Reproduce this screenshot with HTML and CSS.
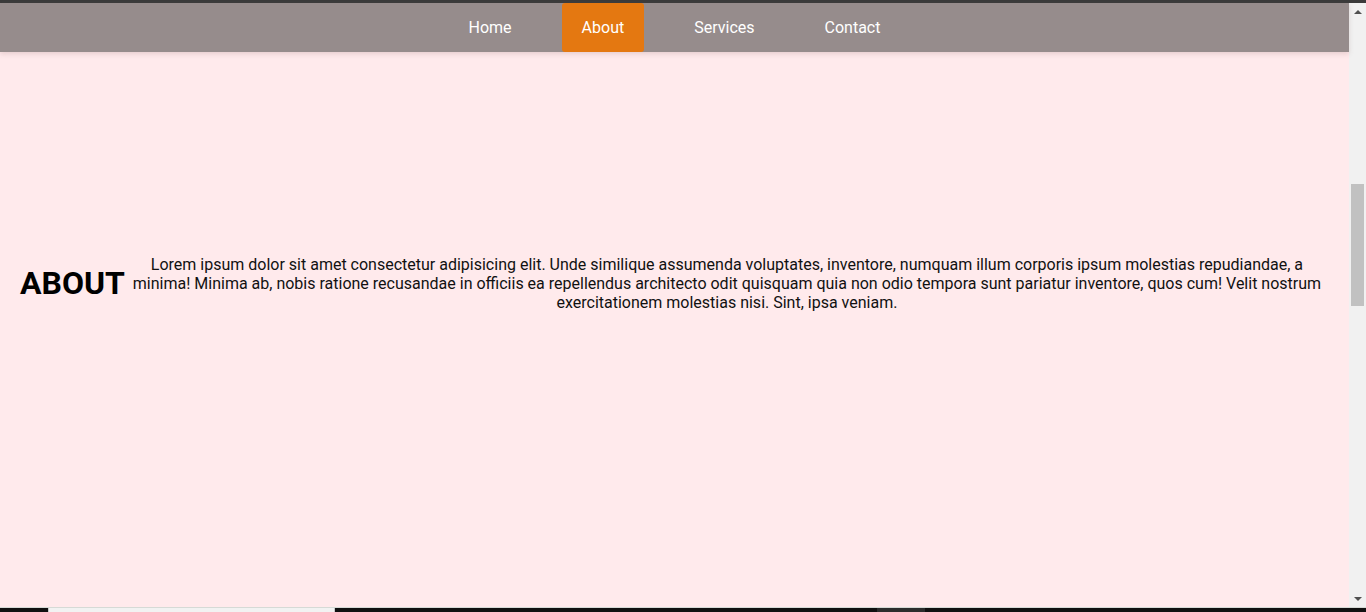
FILE: index.html
```html
<!DOCTYPE html>
<html lang="en">
<head>
<meta charset="utf-8">
<title>About</title>
<link rel="stylesheet" href="styles.css">
</head>
<body>
<div class="topline"></div>
<div class="window">
  <div class="page">
    <nav class="nav">
      <a class="nav-item" href="#">Home</a>
      <a class="nav-item active" href="#">About</a>
      <a class="nav-item" href="#">Services</a>
      <a class="nav-item" href="#">Contact</a>
    </nav>
    <main class="content">
      <section class="about">
        <h1 class="about-title">ABOUT</h1>
        <p class="about-text">Lorem ipsum dolor sit amet consectetur adipisicing elit. Unde similique assumenda voluptates, inventore, numquam illum corporis ipsum molestias repudiandae, a minima! Minima ab, nobis ratione recusandae in officiis ea repellendus architecto odit quisquam quia non odio tempora sunt pariatur inventore, quos cum! Velit nostrum exercitationem molestias nisi. Sint, ipsa veniam.</p>
      </section>
    </main>
  </div>
  <div class="scrollbar">
    <div class="arrow up"></div>
    <div class="track"><div class="thumb"></div></div>
    <div class="arrow down"></div>
  </div>
</div>
<div class="bottomline"></div>
<div class="taskbar">
  <div class="tb-seg dark"></div>
  <div class="tb-seg light"></div>
  <div class="tb-seg dark mid"></div>
  <div class="tb-seg grey"></div>
  <div class="tb-seg dark rest"></div>
</div>
</body>
</html>
```

FILE: styles.css
```css
html, body {
  margin: 0;
  padding: 0;
  height: 612px;
  overflow: hidden;
}
body {
  display: flex;
  flex-direction: column;
  font-family: Roboto, "Liberation Sans", sans-serif;
  background: #ffe9eb;
}
.topline {
  height: 3px;
  background: #3b3b3b;
  flex: none;
}
.window {
  height: 604px;
  display: flex;
  flex: none;
}
.page {
  flex: 1;
  display: flex;
  flex-direction: column;
  background: #ffeaec;
  min-width: 0;
}
.nav {
  height: 49px;
  flex: none;
  background: #968c8c;
  display: flex;
  justify-content: center;
  gap: 30px;
  box-shadow: 0 2px 5px rgba(120, 80, 80, 0.18);
  position: relative;
  z-index: 1;
}
.nav-item {
  display: flex;
  align-items: center;
  padding: 0 20px;
  color: #ffffff;
  text-decoration: none;
  font-size: 16px;
  font-weight: 400;
  border-radius: 3px;
}
.nav-item.active {
  background: #e47811;
}
.content {
  flex: 1;
  display: flex;
  flex-direction: column;
}
.about {
  height: 462px;
  display: flex;
  align-items: center;
  padding: 0 20px;
}
.about-title {
  margin: 0;
  font-size: 32px;
  font-weight: 700;
  color: #000;
  flex: none;
}
.about-text {
  margin: 0;
  flex: 1;
  text-align: center;
  font-size: 16px;
  line-height: 19px;
  color: #111;
}
.scrollbar {
  width: 17px;
  flex: none;
  background: #f1f1f1;
  display: flex;
  flex-direction: column;
  align-items: center;
}
.arrow {
  width: 17px;
  height: 17px;
  flex: none;
  display: flex;
  align-items: center;
  justify-content: center;
}
.arrow::before {
  content: "";
  width: 0;
  height: 0;
  border-left: 4px solid transparent;
  border-right: 4px solid transparent;
}
.arrow.up::before {
  border-bottom: 4px solid #505050;
}
.arrow.down::before {
  border-top: 4px solid #505050;
}
.track {
  flex: 1;
  width: 100%;
  padding-top: 164px;
  box-sizing: border-box;
  display: flex;
  justify-content: center;
}
.thumb {
  width: 13px;
  height: 122px;
  background: #c1c1c1;
}
.bottomline {
  height: 1px;
  background: #d6dad6;
  flex: none;
}
.taskbar {
  height: 4px;
  flex: none;
  display: flex;
  background: #101010;
}
.tb-seg.dark { width: 48px; }
.tb-seg.light {
  width: 285px;
  background: #f2f2f2;
  border-left: 1px solid #c8c8c8;
  border-right: 1px solid #c8c8c8;
}
.tb-seg.mid { width: 542px; }
.tb-seg.grey { width: 48px; background: #2c2c2c; }
.tb-seg.rest { flex: 1; }
```
